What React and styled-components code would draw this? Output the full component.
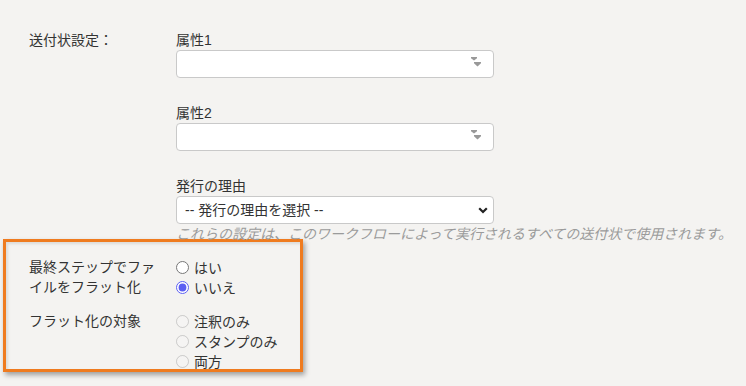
import React from 'react';
import styled, { createGlobalStyle } from 'styled-components';

const GlobalStyle = createGlobalStyle`
  html, body {
    margin: 0;
    padding: 0;
    background: #f4f3f1;
  }
  body {
    font-family: "Liberation Sans", "Noto Sans CJK JP", sans-serif;
    font-size: 14px;
    color: #333;
  }
`;

const Page = styled.div`
  width: 746px;
  height: 386px;
  box-sizing: border-box;
  padding: 31px 0 0 3px;
  overflow: hidden;
`;

const Row = styled.div`
  display: grid;
  grid-template-columns: 133px 318px;
  column-gap: 14px;
  padding-left: ${({ $inset }) => ($inset ? '23px' : '26px')};
  margin-top: ${({ $gap }) => $gap || 0}px;
`;

const Label = styled.div`
  line-height: ${({ $lh }) => $lh || 20}px;
`;

const Fields = styled.div`
  display: flex;
  flex-direction: column;
`;

const Field = styled.div`
  display: flex;
  flex-direction: column;
  margin-top: ${({ $gap }) => $gap || 0}px;
`;

const FieldLabel = styled.div`
  line-height: 19px;
`;

const SelectBox = styled.div`
  position: relative;
  height: 28px;
  box-sizing: border-box;
  background: #fff;
  border: 1px solid #c9c9c9;
  border-radius: 4px;
`;

const ComboIcon = styled.svg`
  position: absolute;
  right: 10px;
  top: 6px;
`;

const SelectWrap = styled.div`
  position: relative;
`;

const NativeSelect = styled.select`
  appearance: none;
  width: 100%;
  height: 28px;
  box-sizing: border-box;
  border: 1px solid #c9c9c9;
  border-radius: 4px;
  background: #fff;
  padding: 0 0 0 8px;
  font: inherit;
  font-size: 14px;
  color: #333;
  outline: none;
`;

const Chevron = styled.svg`
  position: absolute;
  right: 6px;
  top: 11px;
  pointer-events: none;
`;

const Hint = styled.div`
  width: 600px;
  height: 15px;
  line-height: 20px;
  color: #9b9b9b;
  font-style: italic;
  white-space: nowrap;
`;

const Highlight = styled.div`
  width: 300px;
  height: 133px;
  box-sizing: border-box;
  border: 3px solid #ef7b1f;
  padding-top: 15px;
  box-shadow: 2px 3px 5px rgba(0, 0, 0, 0.35), inset 2px 2px 3px rgba(0, 0, 0, 0.1);
`;

const RadioList = styled.div`
  display: flex;
  flex-direction: column;
`;

const RadioLine = styled.label`
  display: flex;
  align-items: center;
  height: 20px;
  color: #333;
  white-space: nowrap;
`;

const Radio = styled.input.attrs({ type: 'radio' })`
  width: 13px;
  height: 13px;
  margin: 0 5px 0 0;
  accent-color: #5b5ef2;
`;

const fields = [
  { label: '属性1', kind: 'combo' },
  { label: '属性2', kind: 'combo' },
  { label: '発行の理由', kind: 'native' },
];

function ComboArrows() {
  return (
    <ComboIcon width="12" height="12" viewBox="0 0 12 12">
      <path d="M0 0H6V1.2L3 3.6 0 1.2Z" fill="#999" />
      <path d="M3 5H10V6.2L6.5 9.4 3 6.2Z" fill="#999" />
    </ComboIcon>
  );
}

function RadioGroup({ name, options, checked, disabled }) {
  return (
    <RadioList>
      {options.map((opt) => (
        <RadioLine key={opt}>
          <Radio name={name} disabled={disabled} defaultChecked={opt === checked} />
          {opt}
        </RadioLine>
      ))}
    </RadioList>
  );
}

export default function App() {
  return (
    <>
      <GlobalStyle />
      <Page>
        <Row>
          <Label $lh={19}>送付状設定：</Label>
          <Fields>
            {fields.map((f, i) => (
              <Field key={f.label} $gap={i === 0 ? 0 : 26}>
                <FieldLabel>{f.label}</FieldLabel>
                {f.kind === 'combo' ? (
                  <SelectBox>
                    <ComboArrows />
                  </SelectBox>
                ) : (
                  <SelectWrap>
                    <NativeSelect defaultValue="">
                      <option value="">-- 発行の理由を選択 --</option>
                    </NativeSelect>
                    <Chevron width="10" height="7" viewBox="0 0 10 7">
                      <path d="M1.2 1.2L5 5 8.8 1.2" fill="none" stroke="#222" strokeWidth="2.2" />
                    </Chevron>
                  </SelectWrap>
                )}
              </Field>
            ))}
            <Hint>これらの設定は、このワークフローによって実行されるすべての送付状で使用されます。</Hint>
          </Fields>
        </Row>
        <Highlight>
          <Row $inset>
            <Label>最終ステップでファイルをフラット化</Label>
            <RadioGroup name="flatten" options={['はい', 'いいえ']} checked="いいえ" />
          </Row>
          <Row $inset $gap={14}>
            <Label>フラット化の対象</Label>
            <RadioGroup name="target" options={['注釈のみ', 'スタンプのみ', '両方']} disabled />
          </Row>
        </Highlight>
      </Page>
    </>
  );
}
